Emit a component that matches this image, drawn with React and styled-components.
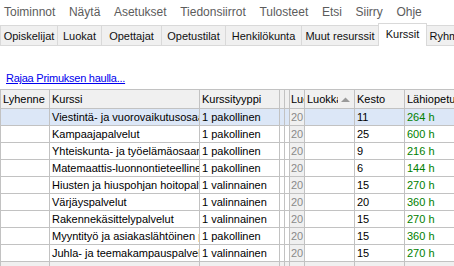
import React from 'react';
import styled, { createGlobalStyle } from 'styled-components';

const GlobalStyle = createGlobalStyle`
  html, body {
    margin: 0;
    background: #ffffff;
    overflow: hidden;
    font-family: "Liberation Sans", Arial, sans-serif;
  }
`;

const COLS = '49px 150px 80px 5px 5px 15px 50px 50px 90px';

const MenuBar = styled.div`
  display: flex;
  height: 23px;
  align-items: center;
  padding-left: 4px;
  gap: 13.6px;
  font-size: 12px;
  color: #5c5c5c;
`;

const MenuItem = styled.span`
  white-space: nowrap;
`;

const TabStrip = styled.div`
  display: flex;
  align-items: flex-end;
  height: 22px;
  border-bottom: 1px solid #d9d9d9;
`;

const Tab = styled.div`
  box-sizing: border-box;
  flex: none;
  width: ${({ w }) => w + 1}px;
  margin-right: -1px;
  height: ${({ active }) => (active ? '23px' : '20px')};
  margin-bottom: ${({ active }) => (active ? '-1px' : '0')};
  padding-bottom: ${({ active }) => (active ? '3px' : '0')};
  border: 1px solid #d9d9d9;
  border-bottom: none;
  background: ${({ active }) => (active ? '#ffffff' : '#f0f0f0')};
  position: relative;
  z-index: ${({ active }) => (active ? 1 : 0)};
  display: flex;
  align-items: center;
  justify-content: center;
  font-size: 11px;
  color: #111111;
  white-space: nowrap;
  overflow: hidden;
`;

const LinkRow = styled.div`
  padding: 24px 0 0 6px;
  height: 13px;
  line-height: 13px;
`;

const FilterLink = styled.a`
  font-size: 11px;
  letter-spacing: -0.25px;
  color: #0000ee;
  text-decoration: underline;
  cursor: pointer;
`;

const Table = styled.div`
  margin-top: 6px;
  border-top: 1px solid #c2c2c2;
  border-left: 1px solid #c2c2c2;
  width: max-content;
`;

const Row = styled.div`
  display: grid;
  grid-template-columns: ${COLS};
  background: ${({ selected, footer }) =>
    selected ? '#dce7f7' : footer ? '#f0f0f0' : '#ffffff'};
`;

const Cell = styled.div`
  box-sizing: border-box;
  height: ${({ head }) => (head ? '19px' : '17px')};
  line-height: ${({ head }) => (head ? '18px' : '16px')};
  padding: ${({ tight }) => (tight ? '0 0 0 1px' : '0 2px')};
  border-right: 1px solid #c2c2c2;
  border-bottom: 1px solid #c2c2c2;
  background: ${({ head, muted }) => (head || muted ? '#f0f0f0' : 'transparent')};
  color: ${({ muted, hours }) => (muted ? '#8a8a8a' : hours ? '#008000' : '#000000')};
  font-size: 11px;
  white-space: nowrap;
  overflow: hidden;
`;

const SortCell = styled(Cell)`
  display: flex;
  align-items: center;
  gap: 3px;
`;

const SortLabel = styled.span`
  flex: 1;
  overflow: hidden;
`;

const SortArrow = () => (
  <svg width="9" height="5" viewBox="0 0 9 5" style={{ flex: 'none', marginRight: 2 }}>
    <polygon points="0,5 4.5,0.5 9,5" fill="#9a9a9a" />
  </svg>
);

const tabs = [
  ['Opiskelijat', 57],
  ['Luokat', 44],
  ['Opettajat', 60],
  ['Opetustilat', 64],
  ['Henkilökunta', 76],
  ['Muut resurssit', 77],
  ['Kurssit', 48, true],
  ['Ryhmät', 44],
];

const menu = ['Toiminnot', 'Näytä', 'Asetukset', 'Tiedonsiirrot', 'Tulosteet', 'Etsi', 'Siirry', 'Ohje'];

const courses = [
  ['Viestintä- ja vuorovaikutusosaaminen', '1 pakollinen', 11, 264],
  ['Kampaajapalvelut', '1 pakollinen', 25, 600],
  ['Yhteiskunta- ja työelämäosaaminen', '1 pakollinen', 9, 216],
  ['Matemaattis-luonnontieteellinen osaaminen', '1 pakollinen', 6, 144],
  ['Hiusten ja hiuspohjan hoitopalvelut', '1 valinnainen', 15, 270],
  ['Värjäyspalvelut', '1 valinnainen', 20, 360],
  ['Rakennekäsittelypalvelut', '1 valinnainen', 15, 270],
  ['Myyntityö ja asiakaslähtöinen palvelu', '1 pakollinen', 15, 360],
  ['Juhla- ja teemakampauspalvelut', '1 valinnainen', 15, 270],
];

export default function App() {
  return (
    <>
      <GlobalStyle />
      <MenuBar>
        {menu.map((m) => <MenuItem key={m}>{m}</MenuItem>)}
      </MenuBar>
      <TabStrip>
        {tabs.map(([label, w, active]) => (
          <Tab key={label} w={w} active={active}>{label}</Tab>
        ))}
      </TabStrip>
      <LinkRow>
        <FilterLink>Rajaa Primuksen haulla...</FilterLink>
      </LinkRow>
      <Table>
        {/* column headers */}
        <Row>
          <Cell head>Lyhenne</Cell>
          <Cell head>Kurssi</Cell>
          <Cell head>Kurssityyppi</Cell>
          <Cell head />
          <Cell head />
          <Cell head tight>Luokka-aste</Cell>
          <SortCell head>
            <SortLabel>Luokka</SortLabel>
            <SortArrow />
          </SortCell>
          <Cell head>Kesto</Cell>
          <Cell head>Lähiopetus</Cell>
        </Row>
        {courses.map(([name, type, length, hours], i) => (
          <Row key={name} selected={i === 0}>
            <Cell />
            <Cell>{name}</Cell>
            <Cell>{type}</Cell>
            <Cell />
            <Cell />
            <Cell muted tight>20</Cell>
            <Cell />
            <Cell>{length}</Cell>
            <Cell hours>{hours} h</Cell>
          </Row>
        ))}
        <Row footer>
          {Array.from({ length: 9 }).map((_, i) => <Cell key={i} />)}
        </Row>
      </Table>
    </>
  );
}
